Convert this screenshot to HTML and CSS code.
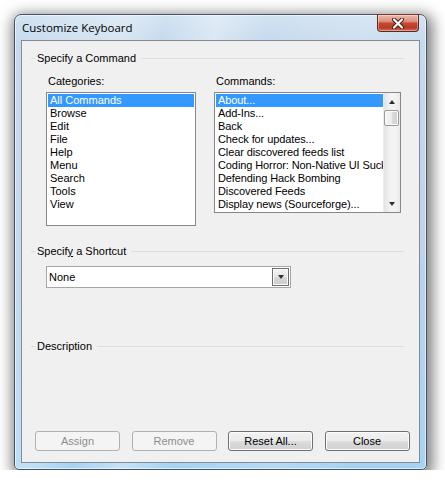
FILE: index.html
```html
<!DOCTYPE html>
<html>
<head>
<meta charset="utf-8">
<link rel="stylesheet" href="styles.css">
</head>
<body>
<div class="page">
  <div class="window">
    <div class="titlebar">
      <span class="title">Customize Keyboard</span>
      <div class="close-btn">
        <svg width="14" height="11" viewBox="0 0 14 11">
          <path d="M3 1.5 L11 9.5 M11 1.5 L3 9.5" stroke="#4a1a12" stroke-width="4" stroke-linecap="round"/>
          <path d="M3 1.5 L11 9.5 M11 1.5 L3 9.5" stroke="#ffffff" stroke-width="2.2" stroke-linecap="round"/>
        </svg>
      </div>
    </div>
    <div class="client">
      <div class="ghead"><span class="lead"></span><span class="gtext">Specify a Command</span><span class="rule"></span></div>
      <div class="cmdrow">
        <div class="col">
          <div class="lbl">Categories:</div>
          <div class="listbox cat-list">
            <div class="item sel">All Commands</div>
            <div class="item">Browse</div>
            <div class="item">Edit</div>
            <div class="item">File</div>
            <div class="item">Help</div>
            <div class="item">Menu</div>
            <div class="item">Search</div>
            <div class="item">Tools</div>
            <div class="item">View</div>
          </div>
        </div>
        <div class="col">
          <div class="lbl">Commands:</div>
          <div class="listbox cmd-list">
            <div class="items">
              <div class="item sel">About...</div>
              <div class="item">Add-Ins...</div>
              <div class="item">Back</div>
              <div class="item">Check for updates...</div>
              <div class="item">Clear discovered feeds list</div>
              <div class="item">Coding Horror: Non-Native UI Sucks</div>
              <div class="item">Defending Hack Bombing</div>
              <div class="item">Discovered Feeds</div>
              <div class="item">Display news (Sourceforge)...</div>
            </div>
            <div class="vscroll">
              <div class="sbtn"><span class="tri up"></span></div>
              <div class="thumb"></div>
              <div class="track"></div>
              <div class="sbtn"><span class="tri down"></span></div>
            </div>
          </div>
        </div>
      </div>
      <div class="ghead shortcut-head"><span class="lead"></span><span class="gtext">Specif<u>y</u> a Shortcut</span><span class="rule"></span></div>
      <div class="combo">
        <span class="combo-text">None</span>
        <div class="combo-btn"><span class="tri down"></span></div>
      </div>
      <div class="ghead desc-head"><span class="lead"></span><span class="gtext">Description</span><span class="rule"></span></div>
      <div class="buttons">
        <div class="btn disabled">Assign</div>
        <div class="btn disabled">Remove</div>
        <div class="btn">Reset All...</div>
        <div class="btn">Close</div>
      </div>
    </div>
  </div>
</div>
</body>
</html>
```
FILE: styles.css
```css
* { box-sizing: border-box; }
html, body { margin: 0; background: #ffffff; }
body {
  font-family: "Liberation Sans", Arial, sans-serif;
  font-size: 11px;
  color: #000;
}
.page { padding: 14px 0 0 14px; }

.window {
  width: 413px;
  height: 456px;
  display: flex;
  flex-direction: column;
  border: 1px solid #47525e;
  border-radius: 7px 7px 5px 5px;
  background:
    linear-gradient(102deg, rgba(255,255,255,0) 0%, rgba(255,255,255,0.3) 22%, rgba(255,255,255,0) 30%, rgba(255,255,255,0.35) 40%, rgba(255,255,255,0) 50%, rgba(255,255,255,0.15) 70%, rgba(255,255,255,0) 85%),
    linear-gradient(180deg, #d2e2f1 0px, #c4d9ed 30px, #b9d3ec 60%, #a6d3f3 100%);
  box-shadow: 2px 4px 14px 4px rgba(0,0,0,0.5), inset 0 0 0 1px rgba(255,255,255,0.6);
}

.titlebar {
  height: 25px;
  display: flex;
  align-items: flex-start;
  padding: 0 7px 0 7px;
}
.title {
  margin-top: 5px;
  font-family: "Open Sans", "Noto Sans", sans-serif;
  font-size: 11.5px;
  line-height: 16px;
  color: #000;
}
.close-btn {
  margin-left: auto;
  margin-top: -1px;
  width: 42px;
  height: 18px;
  border: 1px solid #5e2a20;
  border-top-color: #7a3c30;
  border-radius: 0 0 4px 4px;
  background: linear-gradient(180deg, #ecb9ac 0%, #dc8f7d 40%, #c7462f 52%, #b83a26 80%, #d2735e 100%);
  box-shadow: inset 0 0 0 1px rgba(255,255,255,0.35);
  display: flex;
  align-items: center;
  justify-content: center;
}

.client {
  flex: 1;
  margin: 0 6px 6px 6px;
  border: 1px solid #838c96;
  background: #f0f0f0;
  display: flex;
  flex-direction: column;
}

.ghead {
  display: flex;
  align-items: center;
  height: 13px;
  margin: 11px 15px 0 9px;
}
.ghead .lead { width: 4px; height: 1px; background: #d5dfe5; margin-right: 2px; }
.ghead .gtext { line-height: 13px; white-space: nowrap; }
.ghead .rule { flex: 1; height: 1px; background: #d5dfe5; margin-left: 5px; }
.shortcut-head { margin-top: 19px; }
.desc-head { margin-top: 52px; }

.cmdrow {
  display: flex;
  gap: 18px;
  margin: 10px 0 0 24px;
  align-items: flex-start;
}
.lbl {
  height: 13px;
  line-height: 13px;
  margin-bottom: 4px;
  padding-left: 2px;
}
.listbox {
  background: #ffffff;
  border: 1px solid #828790;
}
.cat-list {
  width: 150px;
  height: 134px;
  padding: 1px;
}
.item {
  height: 13px;
  line-height: 13px;
  padding-left: 2px;
  white-space: nowrap;
}
.item.sel { background: #3399ff; color: #ffffff; }

.cmd-list {
  width: 187px;
  height: 121px;
  display: flex;
}
.cmd-list .items {
  flex: 1;
  min-width: 0;
  overflow: hidden;
  padding: 1px 0 1px 1px;
}
.cmd-list .item { letter-spacing: -0.1px; }
.vscroll {
  width: 17px;
  display: flex;
  flex-direction: column;
  background: linear-gradient(90deg, #e4e4e4 0%, #f3f3f3 40%, #f3f3f3 70%, #e9e9e9 100%);
  border-left: 1px solid #ececec;
}
.sbtn {
  height: 17px;
  display: flex;
  align-items: center;
  justify-content: center;
}
.thumb {
  height: 16px;
  margin: 0 1px 0 0;
  border: 1px solid #9a9a9a;
  border-radius: 2px;
  background: linear-gradient(90deg, #f6f6f6 0%, #ececec 50%, #dcdcdc 51%, #cfcfcf 100%);
  box-shadow: inset 0 0 0 1px #fbfbfb;
}
.track { flex: 1; }
.tri { width: 0; height: 0; border-left: 3.5px solid transparent; border-right: 3.5px solid transparent; }
.tri.up { border-bottom: 4px solid #303030; }
.tri.down { border-top: 4px solid #303030; }

.combo {
  margin: 8px 0 0 24px;
  width: 245px;
  height: 22px;
  background: #ffffff;
  border: 1px solid #a6a6a6;
  display: flex;
  align-items: center;
  padding: 0 1px 0 2px;
}
.combo-text { flex: 1; line-height: 13px; }
.combo-btn {
  width: 17px;
  height: 18px;
  border: 1px solid #6f6f6f;
  background: linear-gradient(180deg, #f3f3f3 0%, #e6e6e6 50%, #d8d8d8 51%, #cdcdcd 100%);
  box-shadow: inset 0 0 0 1px #fafafa;
  display: flex;
  align-items: center;
  justify-content: center;
}

.buttons {
  margin-top: auto;
  display: flex;
  gap: 11.5px;
  padding: 0 0 11px 13px;
}
.btn {
  width: 85px;
  height: 20px;
  border: 1px solid #707070;
  border-radius: 3px;
  background: linear-gradient(180deg, #f2f2f2 0%, #ebebeb 50%, #dddddd 51%, #cfcfcf 100%);
  box-shadow: inset 0 0 0 1px #fcfcfc;
  display: flex;
  align-items: center;
  justify-content: center;
  line-height: 13px;
}
.btn.disabled {
  border-color: #adb2b5;
  background: #f4f4f4;
  color: #8d8d8d;
  box-shadow: none;
}
```
